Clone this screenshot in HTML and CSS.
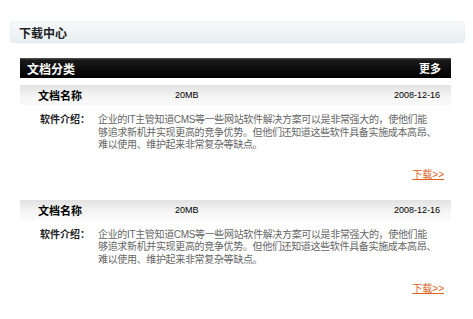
FILE: index.html
```html
<!DOCTYPE html>
<html>
<head>
	<title>下载中心</title>
	<meta http-equiv="Content-Type" content="text/html;charset=utf-8">
	<link rel="stylesheet" href="styles.css">
</head>
<body>
	<div id="main">
		<div class="title-bar"><h2>下载中心</h2></div>
		<div class="panel">
			<div class="panel-head">
				<span>文档分类</span>
				<a href="#">更多</a>
			</div>
			<div class="doc">
				<div class="doc-row">
					<span class="name">文档名称</span>
					<span class="size">20MB</span>
					<span class="date">2008-12-16</span>
				</div>
				<div class="doc-body">
					<span class="label">软件介绍：</span>
					<p>企业的IT主管知道CMS等一些网站软件解决方案可以是非常强大的，使他们能<br>够追求新机并实现更高的竞争优势。但他们还知道这些软件具备实施成本高昂、<br>难以使用、维护起来非常复杂等缺点。</p>
				</div>
				<div class="doc-link"><a href="#">下载&gt;&gt;</a></div>
			</div>
			<div class="doc">
				<div class="doc-row">
					<span class="name">文档名称</span>
					<span class="size">20MB</span>
					<span class="date">2008-12-16</span>
				</div>
				<div class="doc-body">
					<span class="label">软件介绍：</span>
					<p>企业的IT主管知道CMS等一些网站软件解决方案可以是非常强大的，使他们能<br>够追求新机并实现更高的竞争优势。但他们还知道这些软件具备实施成本高昂、<br>难以使用、维护起来非常复杂等缺点。</p>
				</div>
				<div class="doc-link"><a href="#">下载&gt;&gt;</a></div>
			</div>
		</div>
	</div>
</body>
</html>
```
FILE: styles.css
```css
body{margin:0;padding:0;background:#fff;font-family:"Liberation Sans","Noto Sans CJK SC",sans-serif;}
#main{padding:21px 8px 0 10px;}
.title-bar{height:22px;width:455px;border-radius:4px;background:linear-gradient(#f7f9fb,#e8eef2);box-shadow:inset 0 0 2px #dde4ea;display:flex;align-items:center;}
.title-bar h2{margin:0;padding-left:9px;font-size:12px;font-weight:bold;color:#222;}
.panel{width:431px;margin:15px 0 0 10px;}
.panel-head{height:20px;background:linear-gradient(#5a5a5a 0,#1a1a1a 2px,#000 100%);display:flex;justify-content:space-between;align-items:center;padding:0 10px 0 7px;}
.panel-head span{color:#fff;font-size:12px;font-weight:bold;}
.panel-head a{color:#fff;font-size:11px;font-weight:bold;text-decoration:none;}
.doc{margin-top:7px;}
.doc + .doc{margin-top:18px;}
.doc-row{height:20px;background:linear-gradient(#e2e2e2,#f5f5f5 60%,#f9f9f9);display:flex;align-items:center;padding:0 11px 0 18px;font-size:9px;color:#000;}
.doc-row .name{width:137px;font-size:11px;font-weight:bold;}
.doc-row .size{flex:1;}
.doc-body{display:flex;margin-top:9px;padding-left:20px;}
.doc-body .label{width:58px;font-size:10px;font-weight:bold;color:#222;line-height:12.5px;}
.doc-body p{margin:0;font-size:10px;line-height:12.5px;color:#666;letter-spacing:-0.34px;white-space:nowrap;}
.doc-link{text-align:right;padding-right:7px;margin-top:14px;line-height:14px;}
.doc-link a{color:#e0601a;font-size:10px;}
```
